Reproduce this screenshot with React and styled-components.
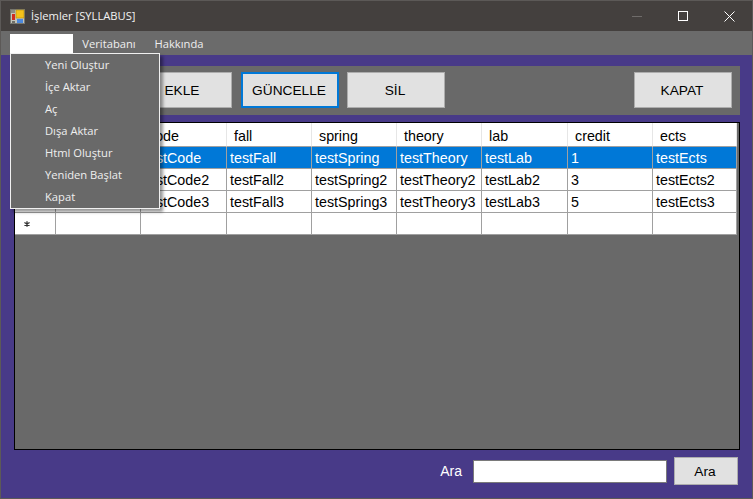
import React from "react";
import styled, { createGlobalStyle } from "styled-components";

const GlobalStyle = createGlobalStyle`
  html, body {
    margin: 0;
    padding: 0;
    background: #483a88;
    overflow: hidden;
  }
  * { box-sizing: border-box; }
`;

const Win = styled.div`
  position: relative;
  width: 753px;
  height: 499px;
  display: flex;
  flex-direction: column;
  background: #483a88;
  border: 1px solid #5c5957;
  font-family: "Liberation Sans", Arial, sans-serif;
`;

const TitleBar = styled.div`
  height: 30px;
  flex: none;
  display: flex;
  align-items: center;
  padding-left: 9px;
  background: #44403e;
  color: #f2f2f2;
  font-family: "Open Sans", "Noto Sans", sans-serif;
  font-size: 11.2px;
`;

const TitleText = styled.span`
  margin-left: 6px;
  margin-top: -2px;
  flex: 1;
`;

const WinBtn = styled.div`
  width: 46px;
  height: 30px;
  display: flex;
  align-items: center;
  justify-content: center;
`;

const MenuBar = styled.div`
  height: 24px;
  flex: none;
  display: flex;
  align-items: flex-start;
  padding: 3px 0 0 9px;
  background: #6b6b6b;
  font-family: "Open Sans", "Noto Sans", sans-serif;
  font-size: 11.2px;
`;

const MenuItem = styled.div`
  height: 19px;
  width: ${(p) => p.$w}px;
  display: flex;
  align-items: center;
  justify-content: center;
  color: ${(p) => (p.$open ? "#fff" : "#efefef")};
  background: ${(p) => (p.$open ? "#fff" : "transparent")};
`;

const Dropdown = styled.div`
  position: absolute;
  left: 9px;
  top: 52px;
  width: 150px;
  height: 156px;
  padding: 0 0 2px 1px;
  display: flex;
  flex-direction: column;
  justify-content: center;
  background: #696969;
  border: 1px solid #f0f0f0;
  box-shadow: 3px 3px 3px rgba(0, 0, 0, 0.4);
  font-family: "Open Sans", "Noto Sans", sans-serif;
  font-size: 11.2px;
  color: #efefef;
`;

const DropItem = styled.div`
  height: 22px;
  flex: none;
  display: flex;
  align-items: center;
  padding-left: 33px;
`;

const Content = styled.div`
  flex: 1;
  display: flex;
  flex-direction: column;
  padding: 11px 12px 0 13px;
`;

const Toolbar = styled.div`
  height: 49px;
  flex: none;
  display: flex;
  align-items: flex-start;
  padding: 6px 8px 0 120px;
  background: #696969;
`;

const ActionButton = styled.button`
  width: 98px;
  height: 36px;
  margin-left: ${(p) => p.$ml || 0}px;
  padding: 0 2px 0 0;
  background: #e1e1e1;
  border: ${(p) => (p.$focus ? "2px solid #0078d7" : "1px solid #adadad")};
  color: #000;
  font-family: "Liberation Sans", Arial, sans-serif;
  font-size: 13.7px;
`;

const Grid = styled.div`
  flex: 1;
  margin-top: 7px;
  background: #696969;
  border: 1px solid #000;
`;

const Row = styled.div`
  display: grid;
  grid-template-columns: 41px 85px 86px 85px 85px 85px 86px 85px 84px;
  height: ${(p) => p.$h}px;
  width: 722px;
  background: ${(p) => (p.$selected ? "#0078d7" : "#fff")};
  color: ${(p) => (p.$selected ? "#fff" : "#000")};
`;

const Cell = styled.div`
  display: flex;
  align-items: center;
  padding: ${(p) => (p.$head ? "3px 0 0 7px" : "1px 0 0 3px")};
  font-size: 14.3px;
  white-space: nowrap;
  overflow: hidden;
  border-right: 1px solid ${(p) => (p.$head ? "#e6e6e6" : "#a0a0a0")};
  border-bottom: 1px solid #a0a0a0;
`;

const RowHead = styled(Cell)`
  padding: 0 0 0 9px;
  background: #fff;
`;

const Footer = styled.div`
  height: 48px;
  flex: none;
  display: flex;
  align-items: center;
  justify-content: flex-end;
  padding-bottom: 6px;
  color: #fff;
  font-size: 14px;
`;

const SearchLabel = styled.span`
  margin-right: 11px;
`;

const SearchInput = styled.input`
  width: 194px;
  height: 23px;
  margin-right: 7px;
  border: 1px solid #7a7a7a;
  background: #fff;
  outline: none;
`;

const SearchButton = styled(ActionButton)`
  width: 64px;
  height: 28px;
  margin-right: 2px;
`;

const columns = ["id", "code", "fall", "spring", "theory", "lab", "credit", "ects"];
const rows = [
  ["1", "testCode", "testFall", "testSpring", "testTheory", "testLab", "1", "testEcts"],
  ["2", "testCode2", "testFall2", "testSpring2", "testTheory2", "testLab2", "3", "testEcts2"],
  ["3", "testCode3", "testFall3", "testSpring3", "testTheory3", "testLab3", "5", "testEcts3"],
];
const menuItems = ["Yeni Oluştur", "İçe Aktar", "Aç", "Dışa Aktar", "Html Oluştur", "Yeniden Başlat", "Kapat"];

function AppIcon() {
  return (
    <svg width="15" height="15" viewBox="0 0 15 15">
      <rect x="0.5" y="0.5" width="14" height="14" fill="#c4c4ba" stroke="#77776f" />
      <rect x="1" y="1" width="4" height="3" fill="#8c8c84" />
      <rect x="2" y="5" width="3" height="6" fill="#d02c20" />
      <rect x="6" y="1" width="8" height="8" fill="#f4c21a" stroke="#b08a10" strokeWidth="0.6" />
      <rect x="7" y="10" width="6" height="4" fill="#4c88dc" />
      <rect x="2" y="12" width="3" height="2" fill="#6f6f68" />
    </svg>
  );
}

function NewRowMark() {
  return (
    <svg width="6" height="6" viewBox="0 0 6 6">
      <path d="M3 0.2V5.8M0.4 1.5L5.6 4.5M5.6 1.5L0.4 4.5" stroke="#333" strokeWidth="1.3" />
    </svg>
  );
}

export default function App() {
  return (
    <Win>
      <GlobalStyle />
      <TitleBar>
        <AppIcon />
        <TitleText>İşlemler [SYLLABUS]</TitleText>
        <WinBtn>
          <svg width="10" height="10"><path d="M0 5.5H10" stroke="#6f6c6a" /></svg>
        </WinBtn>
        <WinBtn>
          <svg width="10" height="10"><rect x="0.5" y="0.5" width="9" height="9" fill="none" stroke="#fff" /></svg>
        </WinBtn>
        <WinBtn>
          <svg width="11" height="11"><path d="M0.5 0.5L10.5 10.5M10.5 0.5L0.5 10.5" stroke="#fff" /></svg>
        </WinBtn>
      </TitleBar>
      <MenuBar>
        <MenuItem $open $w={63}>Program</MenuItem>
        <MenuItem $w={72}>Veritabanı</MenuItem>
        <MenuItem $w={68}>Hakkında</MenuItem>
      </MenuBar>
      <Content>
        <Toolbar>
          <ActionButton>EKLE</ActionButton>
          <ActionButton $focus $ml={9}>GÜNCELLE</ActionButton>
          <ActionButton $ml={8}>SİL</ActionButton>
          <ActionButton $ml={189}>KAPAT</ActionButton>
        </Toolbar>
        <Grid>
          <Row $h={24}>
            <RowHead $head />
            {columns.map((c) => (
              <Cell $head key={c}>{c}</Cell>
            ))}
          </Row>
          {rows.map((r, i) => (
            <Row $h={22} key={r[0]} $selected={i === 0}>
              <RowHead />
              {r.map((v, j) => (
                <Cell key={j}>{v}</Cell>
              ))}
            </Row>
          ))}
          <Row $h={22}>
            <RowHead><NewRowMark /></RowHead>
            {columns.map((c) => (
              <Cell key={c} />
            ))}
          </Row>
        </Grid>
        <Footer>
          <SearchLabel>Ara</SearchLabel>
          <SearchInput />
          <SearchButton>Ara</SearchButton>
        </Footer>
      </Content>
      <Dropdown>
        {menuItems.map((m) => (
          <DropItem key={m}>{m}</DropItem>
        ))}
      </Dropdown>
    </Win>
  );
}
